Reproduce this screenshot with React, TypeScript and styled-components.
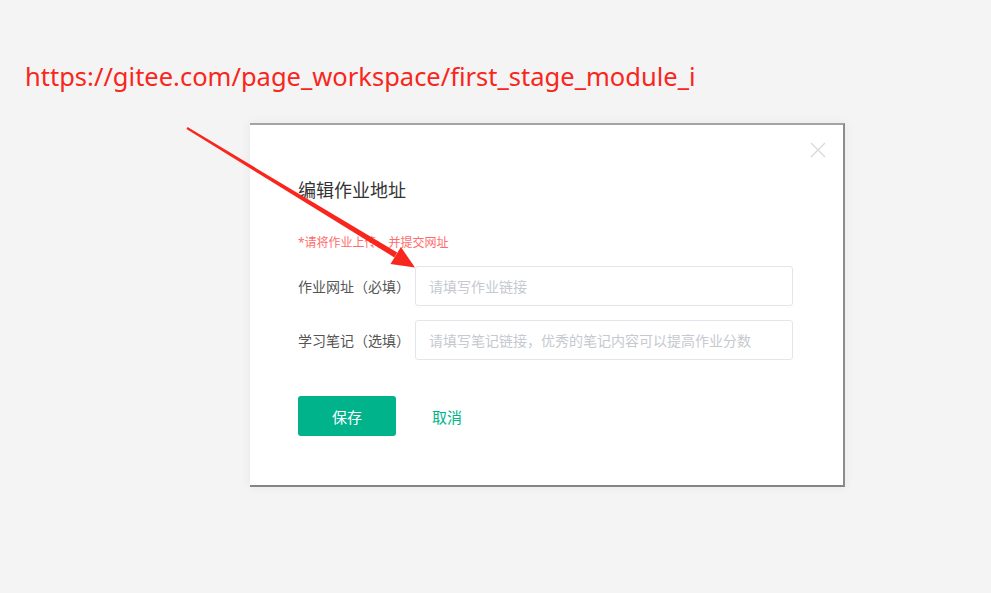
import styled, { createGlobalStyle } from 'styled-components'

const GlobalStyle = createGlobalStyle`
  html, body {
    margin: 0;
    padding: 0;
    background: #f4f4f4;
    font-family: 'Noto Sans', 'Noto Sans CJK SC', sans-serif;
  }
`

export default function App() {
  return (
    <>
      <GlobalStyle />
      <Page>
        <UrlNote>https://gitee.com/page_workspace/first_stage_module_i</UrlNote>
        <Dialog>
          <CloseButton aria-label="close">
            <svg width="16" height="16" viewBox="0 0 16 16">
              <path d="M1 1 L15 15 M15 1 L1 15" stroke="#d9d9d9" strokeWidth="1.3" fill="none" />
            </svg>
          </CloseButton>
          <Title>编辑作业地址</Title>
          <Hint>*请将作业上传，并提交网址</Hint>
          <Form>
            <Row>
              <Label>作业网址（必填）</Label>
              <Input placeholder="请填写作业链接" />
            </Row>
            <Row>
              <Label>学习笔记（选填）</Label>
              <Input placeholder="请填写笔记链接，优秀的笔记内容可以提高作业分数" />
            </Row>
          </Form>
          <Actions>
            <SaveButton>保存</SaveButton>
            <CancelButton>取消</CancelButton>
          </Actions>
        </Dialog>
        <Arrow width="991" height="593" viewBox="0 0 991 593">
          {/* tapered shaft + head of the red annotation arrow */}
          <polygon
            points="186.5,128.9 187.5,127.1 397.2,252.6 394.3,257.4"
            fill="#f8261c"
          />
          <polygon points="415,267.5 390.5,264.1 400.9,247.0" fill="#f8261c" />
        </Arrow>
      </Page>
    </>
  )
}

const Page = styled.div`
  position: relative;
  width: 991px;
  height: 593px;
  padding-top: 57px;
  box-sizing: border-box;
  overflow: hidden;
`

const UrlNote = styled.div`
  padding-left: 25px;
  font-size: 25.5px;
  line-height: 38px;
  color: #f8261c;
  font-family: 'Noto Sans', sans-serif;
`

const Dialog = styled.div`
  position: relative;
  margin: 28px 0 0 250px;
  width: 595px;
  height: 364px;
  box-sizing: border-box;
  background: #fff;
  border-top: 2px solid #a3a3a3;
  border-right: 2px solid #8c8c8c;
  border-bottom: 2px solid #858585;
  box-shadow: 0 0 10px rgba(0, 0, 0, 0.06);
  padding: 53px 50px 0 48px;
`

const CloseButton = styled.div`
  position: absolute;
  top: 17px;
  right: 17px;
  width: 16px;
  height: 16px;
  line-height: 0;
`

const Title = styled.div`
  font-size: 18px;
  line-height: 24px;
  color: #333;
`

const Hint = styled.div`
  margin-top: 33px;
  font-size: 12px;
  line-height: 16px;
  color: #ff6b6b;
`

const Form = styled.div`
  margin-top: 15px;
  display: flex;
  flex-direction: column;
  gap: 14px;
`

const Row = styled.div`
  display: flex;
  align-items: center;
`

const Label = styled.div`
  width: 117px;
  flex-shrink: 0;
  font-size: 14px;
  color: #555;
`

const Input = styled.input`
  width: 378px;
  height: 40px;
  box-sizing: border-box;
  border: 1px solid #e3e5ea;
  border-radius: 3px;
  padding: 0 13px;
  font-size: 14px;
  font-family: 'Noto Sans', 'Noto Sans CJK SC', sans-serif;
  outline: none;
  color: #333;

  &::placeholder {
    color: #c6c9cf;
  }
`

const Actions = styled.div`
  margin-top: 36px;
  display: flex;
  align-items: center;
  gap: 36px;
`

const SaveButton = styled.button`
  width: 98px;
  height: 40px;
  border: none;
  border-radius: 3px;
  background: #00b38a;
  color: #fff;
  font-size: 15px;
  font-family: 'Noto Sans', 'Noto Sans CJK SC', sans-serif;
  cursor: pointer;
`

const CancelButton = styled.button`
  border: none;
  background: none;
  padding: 0;
  color: #00b38a;
  font-size: 15px;
  font-family: 'Noto Sans', 'Noto Sans CJK SC', sans-serif;
  cursor: pointer;
`

const Arrow = styled.svg`
  position: absolute;
  left: 0;
  top: 0;
  pointer-events: none;
`
